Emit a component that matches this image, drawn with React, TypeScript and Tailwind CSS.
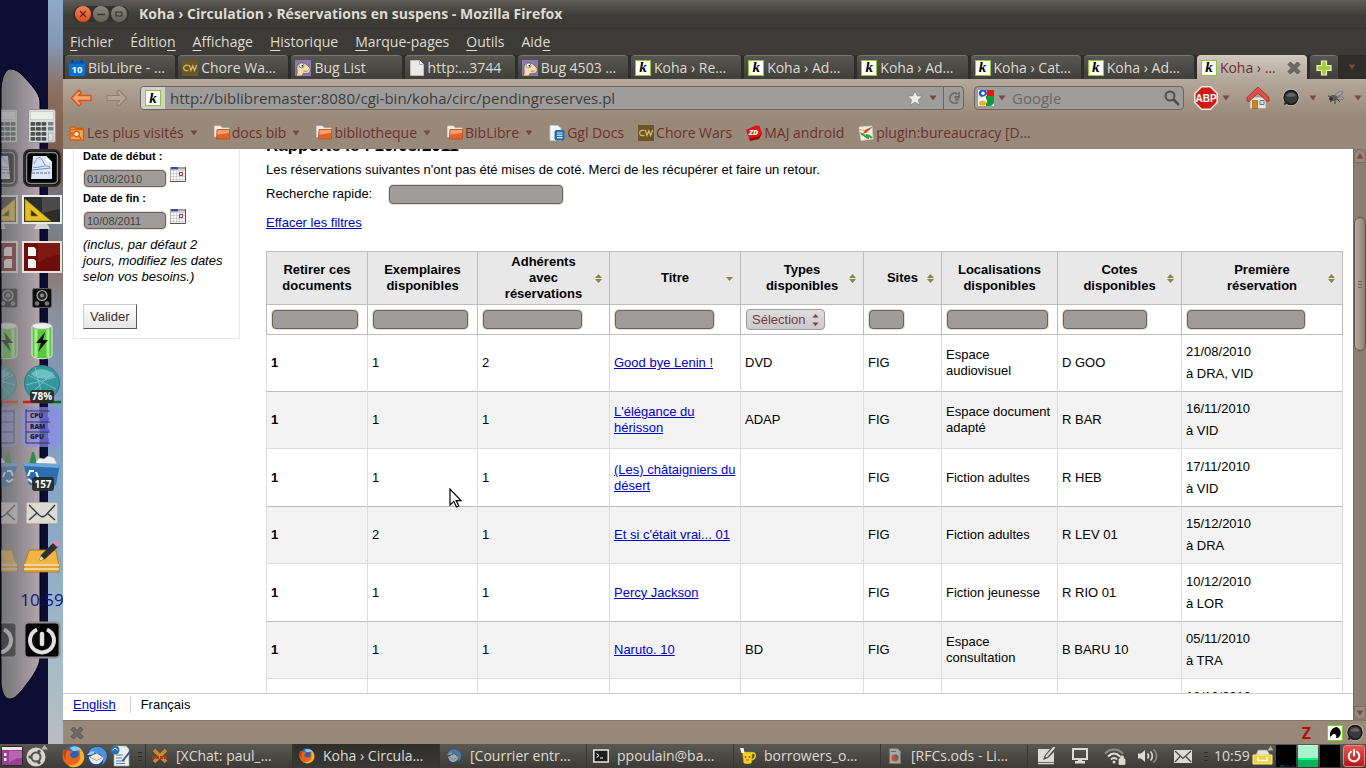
import type { ReactNode } from "react"
import clsx from "clsx"

const UI = "font-['Open_Sans','Noto_Sans',sans-serif]"
const FIELD = "rounded-[4px] border border-[#6e6259] bg-[#9f9d9b] shadow-[0_0_0_1px_#e6ded6] outline-none"

/* ---------- small icons ---------- */

function KohaIcon() {
  return (
    <span className="flex h-4 w-4 shrink-0 items-center justify-center border border-[#8fc531] bg-white font-['Liberation_Serif',serif] text-[15px] leading-none font-bold text-black italic">
      k
    </span>
  )
}

function CwIcon() {
  return (
    <svg viewBox="0 0 16 16" className="h-4 w-4 shrink-0">
      <rect width="16" height="16" fill="#6a552c" />
      <path d="M6.500 5.600C4 4.600 1.600 5.800 1.600 8s2.400 3.300 4.900 2.200M7.300 5l1.700 5.500 1.800-4.700 1.700 4.700L14.600 5" fill="none" stroke="#d3bd63" strokeWidth="1.200" />
    </svg>
  )
}

function CalTenIcon() {
  return (
    <svg viewBox="0 0 16 16" className="h-4 w-4 shrink-0">
      <rect y="1" width="16" height="15" rx="1.500" fill="#0a6fd6" />
      <rect y="1" width="16" height="3" rx="1" fill="#0a57b4" />
      <path d="M3.500 0v3M12.500 0v3" stroke="#0a3a78" strokeWidth="1.500" />
      <text x="8" y="13.300" textAnchor="middle" fontSize="9.500" fontWeight="700" fill="#fff" fontFamily="Open Sans">10</text>
    </svg>
  )
}

function BugIcon() {
  return (
    <svg viewBox="0 0 16 16" className="h-4 w-4 shrink-0">
      <rect width="16" height="16" fill="#8b78b8" />
      <path d="M1 16c2-3 1-5 1-8 0-4 3-6 6-5 3 .3 4 2.500 6 4 2 1.500 1.500 5-.5 6-2 .8-4 .2-5.500.5L7 16z" fill="#f0dcae" stroke="#5c4630" strokeWidth=".6" />
      <circle cx="6.500" cy="5.500" r="2.400" fill="#fff" stroke="#5c4630" strokeWidth=".6" />
      <circle cx="7.300" cy="5.800" r=".9" fill="#222" />
      <path d="M8.500 11c2 .8 4 .3 5-1" fill="none" stroke="#8a6a45" strokeWidth=".7" />
    </svg>
  )
}

function PageIcon() {
  return (
    <svg viewBox="0 0 16 16" className="h-4 w-4 shrink-0">
      <path d="M1.500.5h9l4 4v11h-13z" fill="#e9e9e7" stroke="#bdbdb8" />
      <path d="M10.500.5v4h4" fill="#fff" stroke="#a9a9a4" />
    </svg>
  )
}

function FolderIcon() {
  return (
    <svg viewBox="0 0 16 16" className="h-4 w-4 shrink-0">
      <path d="M.5 1h6l1.500 2h7v9H.5z" fill="#f3efec" stroke="#d8d0ca" strokeWidth=".8" />
      <path d="M3 4.500h12.500V14H2.500z" fill="#e0642b" />
      <path d="M3 4.500h12.500V8c-4 .3-8 1.500-12.800 1.500z" fill="#f3a06d" />
      <path d="M3 4.500h12.500V14H2.500z" fill="none" stroke="#c04a17" strokeWidth=".8" />
    </svg>
  )
}

function VisitedIcon() {
  return (
    <svg viewBox="0 0 16 16" className="h-4 w-4 shrink-0" fill="none" stroke="#d2600f" strokeWidth="1.400">
      <path d="M1 3.500V2h5l1 1.500h7.500V15H1z" fill="#f0a45c" />
      <path d="M1 4.500h13.500" />
      <circle cx="7.500" cy="9" r="2.800" fill="#fff0dc" />
      <path d="M9.500 11l3 3M3 7v5" />
    </svg>
  )
}

function DocsIcon() {
  return (
    <svg viewBox="0 0 16 16" className="h-4 w-4 shrink-0">
      <path d="M1 .5h8l3 3v12H1z" fill="#f4f6f8" stroke="#c4ccd4" strokeWidth=".8" />
      <rect x="5.500" y="5" width="10" height="10.500" rx="2" fill="#1f6fb2" />
      <path d="M8 8h5.500M8 10.300h5.500M8 12.600h5.500" stroke="#fff" strokeWidth="1.100" />
    </svg>
  )
}

function ZdIcon() {
  return (
    <svg viewBox="0 0 16 16" className="h-4 w-4 shrink-0">
      <path d="M0 5L10 .3 13.500 1 16 8l-3 6-9 1.700z" fill="#dd1616" />
      <path d="M4 15.700l9-1.700 3-6-3.500 3.500-9 1.700z" fill="#9c0808" />
      <text x="7.500" y="10" textAnchor="middle" fontSize="7.500" fontWeight="800" fontStyle="italic" fill="#fff" fontFamily="Open Sans">ZD</text>
    </svg>
  )
}

function WikiIcon() {
  return (
    <svg viewBox="0 0 16 16" className="h-4 w-4 shrink-0">
      <path d="M1 2l13-1 1 13-12 1.500z" fill="#f1efe6" stroke="#d9d5c6" strokeWidth=".7" />
      <path d="M15.500 1L8 8l-3 .5L7 5z" fill="#d9452a" />
      <path d="M1.500 4.500l5 1M2 7.500l3 2" stroke="#c9a46a" strokeWidth="1.200" />
      <path d="M3 9c4 0 4 4 8 4M8 10c2 0 4 1 6 3" fill="none" stroke="#2fa53c" strokeWidth="1.900" />
    </svg>
  )
}

function Caret({ className }: { className?: string }) {
  return (
    <svg viewBox="0 0 8 6" className={clsx("h-1.5 w-2 shrink-0", className)}>
      <path d="M.5.5h7L4 5.500z" fill="#7b4542" />
    </svg>
  )
}

function CrossIcon() {
  return (
    <svg viewBox="0 0 14 14" className="h-3.5 w-3.5">
      <path d="M3.500 1L7 4.500 10.500 1 13 3.500 9.500 7l3.500 3.500-2.500 2.500L7 9.500 3.500 13 1 10.500 4.500 7 1 3.500z" fill="#6c6a67" stroke="#4a4846" strokeWidth=".8" />
    </svg>
  )
}

function BubbleIcon() {
  return (
    <svg viewBox="0 0 18 18" className="h-4.5 w-4.5 shrink-0">
      <circle cx="9" cy="8.500" r="8" fill="none" stroke="#d0c8c0" />
      <circle cx="9" cy="8.500" r="7" fill="#3a3a3a" stroke="#111" strokeWidth="1.400" />
      <path d="M3 11l-1 5 6-2z" fill="#222" />
      <path d="M4 7c2-4 8-4 10 0-3 1-7 1-10 0z" fill="#666" />
    </svg>
  )
}

function FirefoxIcon({ className }: { className: string }) {
  return (
    <svg viewBox="0 0 24 24" className={clsx("shrink-0", className)}>
      <circle cx="12" cy="11" r="10.500" fill="#2b62b4" />
      <path d="M8 3c4-3 10-2 13 3-4-1-7 1-10 0z" fill="#8cc9f0" />
      <path d="M2 4c1 1 2 1.500 3.500 1.500C8 5 10 6 11 7.500c-2 .5-3.500 2-2.500 4 1.500 3 6 3 8.500 0 1-2 .5-4-1-6 6 3 7 9 3 13-4 5-12 5-16 0C0 15 0 9 2 4z" fill="#e8661b" />
      <path d="M18 3c6 4 7 12 2 17-4 4-10 4-14 1 7 1 13-2 13-9 0-4-1-6-1-9z" fill="#f7b22b" />
      <path d="M2 4c1 1 2 1.500 3.500 1.500C4 8 3 12 4.500 16 1 13 1 8 2 4z" fill="#c9400f" />
    </svg>
  )
}

function ThunderbirdIcon({ className }: { className: string }) {
  return (
    <svg viewBox="0 0 24 24" className={clsx("shrink-0", className)}>
      <circle cx="12" cy="12" r="11" fill="#1b4a8c" />
      <path d="M3 7C7 0 18 0 22 8c2 5 0 11-5 14 3-5 2-9-2-12-4-2-8-1-12-3z" fill="#4b94d8" />
      <path d="M3 13l9-4 7 5c-1 4-4 7-8 7s-7-3-8-8z" fill="#ece9e2" />
      <path d="M4 13l7.500 4L18 13.500" fill="none" stroke="#9c978c" />
      <path d="M9 7C6 6 3 8 1 11c3-.5 6 0 8-1.500z" fill="#a8cbe8" />
    </svg>
  )
}

/* ---------- desktop dock on the left ---------- */

// `labels` is false for the faded reflection, which shows the bare icon.
const dockIcons: { slot: string; draw: (labels: boolean) => ReactNode }[] = [
  {
    slot: "h-[42px]",
    draw: () => (
      <svg viewBox="0 0 28 34" className="h-[34px] w-7 shrink-0">
        <rect x=".5" y=".5" width="27" height="33" rx="2" fill="#dcdcda" stroke="#8d8d8b" />
        <rect x="2.500" y="2.500" width="23" height="8" fill="#eceee8" stroke="#c4c4c0" strokeWidth=".7" />
        {[13, 18, 23, 28].map((y) =>
          [2.5, 8, 13.5].map((x) => <rect key={`${x}-${y}`} x={x} y={y} width="4.800" height="3.800" rx=".8" fill="#4c5152" />),
        )}
        <rect x="20" y="13" width="5.500" height="3.500" fill="#76858c" />
        <rect x="20" y="18" width="5.500" height="3.500" fill="#76858c" />
        <rect x="20.500" y="24" width="4.500" height="8" fill="#d7e0e6" stroke="#8a969c" strokeWidth=".6" />
      </svg>
    ),
  },
  {
    slot: "h-[42px]",
    draw: () => (
      <svg viewBox="0 0 38 38" className="h-[38px] w-[38px] shrink-0">
        <rect x="1" y="1" width="36" height="36" rx="6" fill="#000" stroke="#2a2a2a" strokeWidth="2" />
        <rect x="3.500" y="3.500" width="31" height="31" rx="4" fill="none" stroke="#8a8a8a" strokeWidth="1.500" />
        <path d="M10 7h13l6 6v17H8z" fill="#dbe7f3" />
        <path d="M23 7v6h6" fill="#fff" />
        <path d="M11 15c5-10 6-8 11 1M9 21l19-2M10 18c6 2 10-3 17 0" fill="none" stroke="#6e93c4" />
        <path d="M9 24h18" stroke="#8a94b6" strokeWidth="1.500" strokeDasharray="3 1" />
      </svg>
    ),
  },
  {
    slot: "h-[47px]",
    draw: () => (
      <svg viewBox="0 0 40 36" className="h-9 w-10 shrink-0">
        <path d="M15 28h10l3 6H12z" fill="#d2d2cf" />
        <rect x="1" y="1" width="38" height="27" fill="#2c2c2c" stroke="#ecebe6" strokeWidth="2" />
        <path d="M20 2h18v12c-8 1-14 4-18 4z" fill="#4a4a4a" />
        <path d="M3 4l26 22H3zM9 15v6h7z" fill="#e3c11f" fillRule="evenodd" stroke="#8a7408" strokeWidth=".6" />
      </svg>
    ),
  },
  {
    slot: "h-[42px]",
    draw: () => (
      <svg viewBox="0 0 40 32" className="h-8 w-10 shrink-0">
        <rect x="1" y="1" width="38" height="30" fill="#6f0d0a" stroke="#e6e4e2" strokeWidth="2" />
        <path d="M16 2h22v12c-10 0-16 4-22 8z" fill="#7e1a13" />
        <path d="M6 6h6l2 2v7H6zM6 18h6l2 2v7H6z" fill="#f3f3f3" />
      </svg>
    ),
  },
  {
    slot: "h-10",
    draw: () => (
      <svg viewBox="0 0 20 20" className="h-5 w-5 shrink-0">
        <rect x=".5" y=".5" width="19" height="19" rx="2" fill="#0d0d0d" stroke="#5c5c5c" />
        <circle cx="10" cy="7.500" r="5" fill="#262626" stroke="#a8a8a8" strokeWidth="1.200" />
        <circle cx="10" cy="7.500" r="2" fill="#8c8c8c" />
        <circle cx="5" cy="15.500" r="2.300" fill="#777" />
        <circle cx="15" cy="15.500" r="2.300" fill="#777" />
      </svg>
    ),
  },
  {
    slot: "h-[45px]",
    draw: () => (
      <svg viewBox="0 0 22 38" className="h-[38px] w-[22px] shrink-0">
        <path d="M1 4v29c0 5 20 5 20 0V4z" fill="#58c93a" stroke="#e4ece0" />
        <path d="M5 6v29M17 6v29" stroke="#a7ee8f" strokeWidth="3" />
        <ellipse cx="11" cy="4" rx="10" ry="3.200" fill="#ecefe9" stroke="#a3aa9f" strokeWidth=".7" />
        <path d="M14 10L5 21h5l-3 9 10-12h-5z" fill="#111" />
      </svg>
    ),
  },
  {
    slot: "h-[42px]",
    draw: (labels) => (
      <svg viewBox="0 0 38 42" className="h-[42px] w-[38px] shrink-0">
        <circle cx="19" cy="20" r="17.500" fill="#36959b" stroke="#2b767c" />
        <path d="M8 11c6-7 18-6 24 2-5 4-18 4-24-2z" fill="#6cc0c2" />
        <path d="M5 12l28 14M12 4l8 32M30 9L8 31M3 22l30-8" stroke="#8bd0d0" strokeWidth=".7" fill="none" />
        <path d="M0 39h18" stroke="#ee1111" strokeWidth="2.500" />
        <path d="M18 39h20" stroke="#0d6b12" strokeWidth="2.500" />
        {labels && (
          <g>
            <rect x="7" y="27" width="24" height="13" rx="3" fill="#222826" fillOpacity=".9" />
            <text x="19" y="37.300" textAnchor="middle" fontSize="10" fontWeight="700" fill="#fff" fontFamily="Open Sans">78%</text>
          </g>
        )}
      </svg>
    ),
  },
  {
    slot: "h-11",
    draw: (labels) => (
      <svg viewBox="0 0 40 40" className="h-10 w-10 shrink-0">
        <rect width="40" height="40" rx="7" fill="#8b8ce6" fillOpacity=".7" />
        <path d="M4 2v34M4 4h24M4 15h24M4 25h24M4 36h24" stroke="#333355" fill="none" />
        {labels && (
          <g fontSize="6.500" fontWeight="800" fill="#1b1b2c" fontFamily="Open Sans">
            <text x="8" y="11">CPU</text>
            <text x="8" y="21.500">RAM</text>
            <text x="8" y="32">GPU</text>
          </g>
        )}
        <path d="M20 12h7M20 23h7M20 33h7" stroke="#6a55e0" strokeWidth="2.500" strokeDasharray="3 1" />
      </svg>
    ),
  },
  {
    slot: "h-11",
    draw: (labels) => (
      <svg viewBox="0 0 38 42" className="h-[42px] w-[38px] shrink-0">
        <path d="M6 14L9 2h2l3 12z" fill="#2f8c46" />
        <path d="M13 12l3-4 5 1 4-3 6 2 3 6-19 3z" fill="#eef0f2" stroke="#b7bcc2" strokeWidth=".6" />
        <path d="M0 13l37 1-4 21c-8 4-18 4-27-1z" fill="#2d6fae" />
        <path d="M0 13l37 1-1 4-35-2z" fill="#69a7dc" />
        <path d="M5 26l2-5h4M5 29l4 3 3-2M13 22l2 5" fill="none" stroke="#fff" strokeWidth="2" />
        {labels && (
          <g>
            <rect x="9" y="27" width="22" height="14" rx="3" fill="#222826" fillOpacity=".9" />
            <text x="20" y="37.800" textAnchor="middle" fontSize="10" fontWeight="700" fill="#fff" fontFamily="Open Sans">157</text>
          </g>
        )}
      </svg>
    ),
  },
  {
    slot: "h-10",
    draw: () => (
      <svg viewBox="0 0 32 22" className="h-[22px] w-8 shrink-0">
        <rect x=".5" y=".5" width="31" height="21" rx="1.500" fill="#dddad2" stroke="#b5b2aa" />
        <path d="M3 3l10 10 3 2 3-1L29 3M3 18l8-7M29 18l-8-7" fill="none" stroke="#2e3742" strokeWidth="1.400" />
      </svg>
    ),
  },
  {
    slot: "h-12",
    draw: () => (
      <svg viewBox="0 0 38 36" className="h-9 w-[38px] shrink-0">
        <path d="M6 11h27l3 15v7H1v-7z" fill="#e0a63a" stroke="#b07918" strokeWidth=".8" />
        <path d="M1 26h35M1 30h35" stroke="#f6e5b4" strokeWidth="1.500" />
        <path d="M7 12h25l3 13H3z" fill="#efb549" />
        <path d="M16 22l2-6L30 4l5 4-13 12z" fill="#2f2f2f" />
        <path d="M30 4l2-2c2-1 5 1 4 4l-2 2z" fill="#e58aa8" />
        <path d="M16 22l2-5 3 3z" fill="#f1dcb8" />
      </svg>
    ),
  },
  {
    slot: "h-9",
    draw: (labels) =>
      labels && (
        <svg viewBox="0 0 42 36" className="h-9 w-[42px] shrink-0">
          <text x="21" y="25" textAnchor="middle" fontSize="17" fill="#111488" fontFamily="Open Sans">10:59</text>
        </svg>
      ),
  },
  {
    slot: "h-[46px]",
    draw: () => (
      <svg viewBox="0 0 38 38" className="h-[38px] w-[38px] shrink-0">
        <rect x="1.500" y="1.500" width="35" height="35" rx="4" fill="#020202" stroke="#8e8e8e" strokeWidth="2" />
        <path d="M14 8.500a12 12 0 1 0 10 0" fill="none" stroke="#e0e0e0" strokeWidth="4" />
        <path d="M19 13v10" stroke="#e0e0e0" strokeWidth="4.500" strokeLinecap="round" />
      </svg>
    ),
  },
]

function Dock() {
  return (
    <aside className="relative flex w-[63px] shrink-0 overflow-hidden bg-[linear-gradient(to_bottom,#8ea9c6_0,#8298b4_6%,#8d6f60_12%,#7a5a49_22%,#71879f_29%,#8b7468_35%,#89909c_42%,#7f9dc6_55%,#8eacc4_75%,#a3bccb_88%,#b9bcc0_100%)]">
      <div className="w-12 bg-[#0b0d33]" />
      <svg viewBox="0 0 63 744" className="absolute top-0 left-0 h-[744px] w-[63px]">
        <defs>
          <linearGradient id="dock">
            <stop offset="0" stopColor="#747474" />
            <stop offset=".5" stopColor="#908b90" />
            <stop offset="1" stopColor="#b6a5ae" />
          </linearGradient>
        </defs>
        <path d="M1 88C2 76 6 69 10 69c6 0 11 4 16 10 9 10 14 16 14 24v554c0 8-6 18-14 28-6 8-11 14-16 14-5 0-8-5-9-16z" fill="url(#dock)" stroke="#000" />
      </svg>
      <div className="absolute inset-0 flex flex-col pt-[105px]">
        {dockIcons.map(({ slot, draw }, i) => (
          <div key={i} className={clsx("flex items-center", slot)}>
            <div className="ml-px flex w-[17px] shrink-0 justify-end overflow-hidden opacity-40 [&>svg]:-scale-x-100" aria-hidden="true">
              {draw(false)}
            </div>
            <div className="flex min-w-0 flex-1 justify-center pl-0.5">{draw(true)}</div>
          </div>
        ))}
      </div>
    </aside>
  )
}

/* ---------- browser chrome ---------- */

const menus = [
  ["", "F", "ichier"],
  ["Éditio", "n", ""],
  ["", "A", "ffichage"],
  ["", "H", "istorique"],
  ["", "M", "arque-pages"],
  ["", "O", "utils"],
  ["Aid", "e", ""],
]

const tabs: { label: string; icon: ReactNode; active?: boolean }[] = [
  { label: "BibLibre - …", icon: <CalTenIcon /> },
  { label: "Chore Wa…", icon: <CwIcon /> },
  { label: "Bug List", icon: <BugIcon /> },
  { label: "http:…3744", icon: <PageIcon /> },
  { label: "Bug 4503 …", icon: <BugIcon /> },
  { label: "Koha › Re…", icon: <KohaIcon /> },
  { label: "Koha › Ad…", icon: <KohaIcon /> },
  { label: "Koha › Ad…", icon: <KohaIcon /> },
  { label: "Koha › Cat…", icon: <KohaIcon /> },
  { label: "Koha › Ad…", icon: <KohaIcon /> },
  { label: "Koha › …", icon: <KohaIcon />, active: true },
]

const bookmarks: { label: string; icon: ReactNode; menu?: boolean }[] = [
  { label: "Les plus visités", icon: <VisitedIcon />, menu: true },
  { label: "docs bib", icon: <FolderIcon />, menu: true },
  { label: "bibliotheque", icon: <FolderIcon />, menu: true },
  { label: "BibLibre", icon: <FolderIcon />, menu: true },
  { label: "Ggl Docs", icon: <DocsIcon /> },
  { label: "Chore Wars", icon: <CwIcon /> },
  { label: "MAJ android", icon: <ZdIcon /> },
  { label: "plugin:bureaucracy [D…", icon: <WikiIcon /> },
]

function TitleBar() {
  return (
    <header className={clsx(UI, "bg-[#3c3b37] text-[#dfdbd2]")}>
      <div className="flex h-[29px] items-center border-b border-[#383733] bg-linear-to-b from-[#5d5b55] to-[#3c3b37] to-60% pl-2.5">
        <div className="flex items-center gap-0.5 rounded-full bg-[#33322e] px-0.5">
          <button aria-label="Fermer" className="flex h-4 w-4 items-center justify-center rounded-full bg-linear-to-b from-[#f58256] to-[#dd4b15]">
            <svg viewBox="0 0 8 8" className="h-2 w-2"><path d="M1 1l6 6M7 1L1 7" stroke="#5a2412" strokeWidth="1.300" /></svg>
          </button>
          <button aria-label="Réduire" className="flex h-4 w-4 items-center justify-center rounded-full bg-linear-to-b from-[#8a877d] to-[#65625a]">
            <svg viewBox="0 0 8 8" className="h-2 w-2"><path d="M0 4.500h8" stroke="#35342f" strokeWidth="1.300" /></svg>
          </button>
          <button aria-label="Agrandir" className="flex h-4 w-4 items-center justify-center rounded-full bg-linear-to-b from-[#8a877d] to-[#65625a]">
            <svg viewBox="0 0 8 8" className="h-2 w-2"><path d="M1 2h6v4H1z" fill="none" stroke="#35342f" strokeWidth="1.200" /></svg>
          </button>
        </div>
        <h1 className="ml-2.5 text-sm font-bold whitespace-nowrap">Koha › Circulation › Réservations en suspens - Mozilla Firefox</h1>
      </div>
      <nav className="flex h-[26px] items-center gap-[17px] px-[7px] text-sm">
        {menus.map(([before, key, after]) => (
          <button key={before + key + after}>
            {before}
            <span className="underline underline-offset-3">{key}</span>
            {after}
          </button>
        ))}
      </nav>
    </header>
  )
}

function TabBar() {
  return (
    <div className={clsx(UI, "flex h-6 items-end gap-[3px] bg-[#2e2d2a] pl-0.5 text-sm")}>
      {tabs.map(({ label, icon, active }, i) => (
        <div
          key={i}
          className={clsx(
            "flex h-6 min-w-0 flex-1 items-center rounded-t-[4px] border-t px-1",
            active ? "border-[#d8cec4] bg-linear-to-b from-[#cfc6bd] to-[#b5a99d] text-[#6e2f2f]" : "border-[#77756f] bg-linear-to-b from-[#575650] to-[#403f3b] text-[#dfdbd2]",
          )}
        >
          <button className="flex min-w-0 flex-1 items-center gap-[3px] whitespace-nowrap">
            {icon}
            <span>{label}</span>
          </button>
          {active && (
            <button aria-label="Fermer l'onglet" className="mr-0.5">
              <CrossIcon />
            </button>
          )}
        </div>
      ))}
      <button aria-label="Nouvel onglet" className="flex h-6 w-7 items-center justify-center rounded-t-[4px] border-t border-[#77756f] bg-linear-to-b from-[#575650] to-[#403f3b]">
        <svg viewBox="0 0 16 16" className="h-4 w-4"><path d="M5.500 1h5v4.500H15v5h-4.500V15h-5v-4.500H1v-5h4.500z" fill="#a4cf3e" stroke="#e8f4c8" strokeWidth="1.200" /></svg>
      </button>
      <button aria-label="Liste des onglets" className="flex h-6 w-[25px] items-center justify-center pr-1">
        <Caret />
      </button>
    </div>
  )
}

function NavBar() {
  return (
    <div className="flex h-[38px] items-center bg-linear-to-b from-[#b5a99d] to-[#998979] pr-1 pl-[7px]">
      <button aria-label="Précédent">
        <svg viewBox="0 0 22 18" className="h-[18px] w-[22px]"><path d="M9 1L1.500 9 9 17l2.500-2.500L8.500 11.500H21v-5H8.500l3-3z" fill="#f5a46f" stroke="#d4561c" strokeWidth="1.500" strokeLinejoin="round" /></svg>
      </button>
      <button aria-label="Suivant" className="ml-3.5">
        <svg viewBox="0 0 22 18" className="h-[18px] w-[22px]"><path d="M13 1l7.500 8L13 17l-2.500-2.500 3-3H1v-5h12.500l-3-3z" fill="#b3a699" stroke="#8e8173" strokeWidth="1.100" strokeLinejoin="round" /></svg>
      </button>
      <form className="ml-3 flex h-6 min-w-0 flex-1 items-center overflow-hidden rounded-[4px] border border-[#6e6259] bg-[#9f9d9b]">
        <span className="flex h-full w-6 shrink-0 items-center justify-center bg-[#d2d0ce]">
          <KohaIcon />
        </span>
        <input aria-label="Adresse" defaultValue="http://biblibremaster:8080/cgi-bin/koha/circ/pendingreserves.pl" className={clsx(UI, "min-w-0 flex-1 bg-transparent pl-[5px] text-[15px] text-[#3c3c3c] outline-none")} />
        <svg viewBox="0 0 16 16" className="h-4 w-4"><path d="M8 1l2.100 4.800 5.200.5-3.900 3.500 1.100 5.200L8 12.300 3.500 15l1.100-5.200L.7 6.300l5.200-.5z" fill="#ececec" stroke="#777" strokeWidth=".6" /></svg>
        <Caret className="mx-1.5" />
        <button type="button" aria-label="Actualiser" className="flex h-full w-5 items-center justify-center border-l border-[#6e6259]">
          <svg viewBox="0 0 14 14" className="h-3.5 w-3.5"><path d="M10.500 3A5 5 0 1 0 11 11M12 1v5H7.500M8 8.500h4" fill="none" stroke="#6d6a67" strokeWidth="1.800" /></svg>
        </button>
      </form>
      <form className="ml-2.5 flex h-6 w-[210px] shrink-0 items-center rounded-[4px] border border-[#6e6259] bg-[#9f9d9b] px-[3px]">
        <svg viewBox="0 0 16 16" className="h-4 w-4 shrink-0">
          <rect width="16" height="16" fill="#e8e8e8" />
          <path d="M9 0h7v6H9z" fill="#e8170b" />
          <path d="M8 6h8v7l-3 3H8z" fill="#119a3c" />
          <path d="M3 0h6l-1 1c2 2 1 5-2 5L4 7C0 6 0 1 3 0z" fill="#2456c4" />
          <path d="M4 7c4 1 5 2 5 5s-7 3-9 1 1-4 5-4z" fill="#fff" />
          <ellipse cx="4.500" cy="13" rx="3.600" ry="2.500" fill="#f3b30f" />
          <circle cx="5" cy="3.300" r="1.700" fill="#fff" />
        </svg>
        <Caret className="ml-1" />
        <input aria-label="Google" placeholder="Google" className={clsx(UI, "ml-1.5 min-w-0 flex-1 bg-transparent text-[15px] outline-none placeholder:text-[#6b6661]")} />
        <button type="button" aria-label="Rechercher">
          <svg viewBox="0 0 16 16" className="h-4 w-4"><circle cx="6" cy="6" r="4.500" fill="none" stroke="#4f4c49" strokeWidth="2" /><path d="M9.500 9.500l5.500 5.500" stroke="#4f4c49" strokeWidth="2.500" /></svg>
        </button>
      </form>
      <button aria-label="Adblock Plus" className="ml-2.5 flex items-center gap-1">
        <svg viewBox="0 0 24 24" className="h-6 w-6">
          <path d="M7.500.8h9l6.700 6.700v9l-6.700 6.700h-9L.8 16.500v-9z" fill="#cf1a14" stroke="#f1e6e2" strokeWidth="1.600" />
          <text x="12" y="15.600" textAnchor="middle" fontSize="10" fontWeight="800" fill="#fff" fontFamily="Liberation Sans">ABP</text>
        </svg>
        <Caret />
      </button>
      <button aria-label="Accueil" className="ml-4">
        <svg viewBox="0 0 24 24" className="h-6 w-6">
          <path d="M4 11h16v11.500H4z" fill="#ece6e1" stroke="#a89d94" strokeWidth=".8" />
          <path d="M12 1L1 11.500V15l2 .5L12 7l9 8.500 2-.5v-3.500z" fill="#dd4f4c" stroke="#a02320" strokeWidth=".8" />
          <path d="M6.500 14.500h5v8h-5z" fill="#d0851f" stroke="#8f5a10" strokeWidth=".7" />
          <path d="M14 14.500h4v4h-4z" fill="#cfe0ea" stroke="#67757e" />
        </svg>
      </button>
      <button aria-label="Messages" className="ml-3 flex items-center gap-[9px]">
        <BubbleIcon />
        <Caret />
      </button>
      <button aria-label="Firebug" className="ml-2.5 flex items-center gap-[9px]">
        <svg viewBox="0 0 18 16" className="h-4 w-[18px]">
          <path d="M1 6l5 1M3 12l4-3M8 14v-4M13 12l-3-3" stroke="#3d3a38" />
          <ellipse cx="6.500" cy="8" rx="4" ry="3" fill="#5e5b59" />
          <circle cx="4" cy="9" r="1.800" fill="#2a2727" />
          <path d="M8 6c1-4 5-5 8-4-1 3-4 5-8 4zM10 8c3-2 6-1 7 1-3 1-5 1-7-1z" fill="#a5a3a3" stroke="#5c5957" strokeWidth=".6" />
        </svg>
        <Caret />
      </button>
    </div>
  )
}

function BookmarksBar() {
  return (
    <nav className={clsx(UI, "flex h-8 items-center gap-3.5 border-b border-[#8c8781] bg-[#998979] px-1.5 text-sm text-[#6e2f2f]")}>
      {bookmarks.map(({ label, icon, menu }) => (
        <a key={label} href="#" className="flex items-center gap-0.5 whitespace-nowrap">
          {icon}
          {label}
          {menu && <Caret className="mr-0.5 ml-1" />}
        </a>
      ))}
    </nav>
  )
}

/* ---------- page content ---------- */

function CalendarIcon() {
  return (
    <svg viewBox="0 0 16 15" className="h-[15px] w-4">
      <path d="M0 0h16v15H0z" fill="#fff" />
      <path d="M1 3.500h14M1 6.500h14M1 9.500h14M1 12.500h14M3.500 3v11M6.500 3v11M9.500 3v11M12.500 3v11" stroke="#c9c9c9" strokeWidth=".8" />
      <path d="M1 0h7v2.500H1z" fill="#3d4a9c" />
      <path d="M8 0h8v2.500H8z" fill="#a6a6a6" />
      <path d="M9.500 5.500h3v3h-3z" fill="#fff" stroke="#a32c34" />
      <path d="M.5 0v14" stroke="#aaa" />
      <path d="M15.500 0v14.500H0" fill="none" stroke="#555" />
    </svg>
  )
}

function DateField({ id, label, value }: { id: string; label: string; value: string }) {
  return (
    <div className="pb-1 text-[11px]">
      <label htmlFor={id} className="block leading-[14px] font-bold">
        {label}
      </label>
      <div className="mt-[7px] flex h-[17px] items-center gap-1 pl-px">
        <input id={id} defaultValue={value} className={clsx(FIELD, "h-[17px] w-[82px] px-0.5 text-[#444]")} />
        <button aria-label="Calendrier" className="-mt-2">
          <CalendarIcon />
        </button>
      </div>
    </div>
  )
}

function SortIcon({ desc }: { desc?: boolean }) {
  return (
    <svg viewBox="0 0 7 9" className="h-[9px] w-[7px] justify-self-center">
      {!desc && <path d="M3.500 0L7 4H0z" fill="#85854c" />}
      {desc ? <path d="M0 3h7L3.500 7z" fill="#85854c" /> : <path d="M0 5h7L3.500 9z" fill="#85854c" />}
    </svg>
  )
}

const columns = [
  { title: "Retirer ces documents", col: "w-[101px]", field: "w-[86px]" },
  { title: "Exemplaires disponibles", col: "w-[110px]", field: "w-[95px]" },
  { title: "Adhérents avec réservations", col: "w-[132px]", field: "w-[99px]", sort: "both" },
  { title: "Titre", col: "w-[131px]", field: "w-[99px]", sort: "desc" },
  { title: "Types disponibles", col: "w-[123px]", field: "", sort: "both" },
  { title: "Sites", col: "w-[78px]", field: "w-[35px]", sort: "both" },
  { title: "Localisations disponibles", col: "w-[116px]", field: "w-[101px]" },
  { title: "Cotes disponibles", col: "w-[124px]", field: "w-[84px]", sort: "both" },
  { title: "Première réservation", col: "w-[161px]", field: "w-[118px]", sort: "both" },
]

const rows = [
  { pull: "1", items: "1", patrons: "2", title: "Good bye Lenin !", type: "DVD", site: "FIG", loc: "Espace audiovisuel", call: "D GOO", date: "21/08/2010", at: "à DRA, VID" },
  { pull: "1", items: "1", patrons: "1", title: "L'élégance du hérisson", type: "ADAP", site: "FIG", loc: "Espace document adapté", call: "R BAR", date: "16/11/2010", at: "à VID" },
  { pull: "1", items: "1", patrons: "1", title: "(Les) châtaigniers du désert", type: "", site: "FIG", loc: "Fiction adultes", call: "R HEB", date: "17/11/2010", at: "à VID" },
  { pull: "1", items: "2", patrons: "1", title: "Et si c'était vrai... 01", type: "", site: "FIG", loc: "Fiction adultes", call: "R LEV 01", date: "15/12/2010", at: "à DRA" },
  { pull: "1", items: "1", patrons: "1", title: "Percy Jackson", type: "", site: "FIG", loc: "Fiction jeunesse", call: "R RIO 01", date: "10/12/2010", at: "à LOR" },
  { pull: "1", items: "1", patrons: "1", title: "Naruto. 10", type: "BD", site: "FIG", loc: "Espace consultation", call: "B BARU 10", date: "05/11/2010", at: "à TRA" },
  { pull: "", items: "", patrons: "", title: "", type: "", site: "", loc: "", call: "", date: "18/10/2010", at: "" },
]

function HoldsTable() {
  return (
    <table className="mt-5 w-full table-fixed border-collapse border border-[#bcbcbc]">
      <colgroup>
        {columns.map((c) => (
          <col key={c.title} className={c.col} />
        ))}
      </colgroup>
      <thead>
        <tr className="h-[53px] bg-[#e8e8e8]">
          {columns.map((c) => (
            <th key={c.title} className="border border-[#bcbcbc] px-1 py-0 leading-4 font-bold">
              {c.sort ? (
                <div className="grid grid-cols-[14px_1fr_14px] items-center">
                  <span />
                  <span>{c.title}</span>
                  <SortIcon desc={c.sort === "desc"} />
                </div>
              ) : (
                c.title
              )}
            </th>
          ))}
        </tr>
        <tr className="h-[30px]">
          {columns.map((c) => (
            <td key={c.title} className="border border-[#bcbcbc] p-0 pl-[5px]">
              {c.field ? (
                <input aria-label={c.title} className={clsx(FIELD, "block h-[19px]", c.field)} />
              ) : (
                <div className="relative w-[79px]">
                  <select aria-label={c.title} className="block h-[21px] w-full appearance-none rounded-[4px] border border-[#9b9b9b] bg-linear-to-b from-[#dedede] to-[#c9c9c9] pl-[5px] text-[13px] text-[#7a3b3b]">
                    <option>Sélection</option>
                  </select>
                  <svg viewBox="0 0 7 13" className="pointer-events-none absolute top-1 right-1.5 h-[13px] w-[7px]"><path d="M3.500 1L6.500 4.500h-6zM.5 9.500h6l-3 3.500z" fill="#7a3b3b" /></svg>
                </div>
              )}
            </td>
          ))}
        </tr>
      </thead>
      <tbody>
        {rows.map((r, i) => (
          <tr
            key={i}
            className={clsx(
              "*:border-x *:border-[#dcdcdc] *:py-0 *:pr-0 *:pl-1",
              i % 2 ? "h-[57px] border-b border-b-[#dcdcdc] bg-[#f3f3f3]" : "h-[58px] border-b border-b-[#bcbcbc] first:h-[57px]",
            )}
          >
            <td className="font-bold">{r.pull}</td>
            <td>{r.items}</td>
            <td>{r.patrons}</td>
            <td>
              {r.title && (
                <a href="#" className="text-[#0000cc] underline">
                  {r.title}
                </a>
              )}
            </td>
            <td>{r.type}</td>
            <td>{r.site}</td>
            <td>{r.loc}</td>
            <td>{r.call}</td>
            <td className="leading-[22px]">
              <div>{r.date}</div>
              <div className="h-[22px]">{r.at}</div>
            </td>
          </tr>
        ))}
      </tbody>
    </table>
  )
}

function Page() {
  return (
    <div className="relative flex min-h-0 flex-1 bg-white font-['Liberation_Sans',Arial,sans-serif] text-[13px] leading-4 text-black">
      <div className="flex min-w-0 flex-1 flex-col">
        <div className="flex min-h-0 flex-1 items-start overflow-hidden pr-[11px] pl-2.5">
          <aside className="w-[167px] shrink-0 border border-t-0 border-[#e8e8e8] px-[9px] pb-[9px]">
            <DateField id="start" label="Date de début :" value="01/08/2010" />
            <DateField id="end" label="Date de fin :" value="10/08/2011" />
            <p className="mt-1 italic">(inclus, par défaut 2 jours, modifiez les dates selon vos besoins.)</p>
            <button className="mt-[19px] block h-[25px] border border-t-[#ccc] border-r-[#555] border-b-[#555] border-l-[#ccc] bg-linear-to-b from-white to-[#e6e6e6] px-1.5 text-[#333]">Valider</button>
          </aside>
          <main className="ml-[26px] min-w-0 flex-1">
            <h2 className="-mt-[13px] text-[17px] leading-5 font-bold">Rapporté le : 10/08/2011</h2>
            <p className="mt-1.5">Les réservations suivantes n'ont pas été mises de coté. Merci de les récupérer et faire un retour.</p>
            <div className="mt-1.5 flex h-5 items-center">
              <label htmlFor="quick" className="w-[123px]">
                Recherche rapide:
              </label>
              <input id="quick" className={clsx(FIELD, "h-[19px] w-[174px]")} />
            </div>
            <a href="#" className="mt-[11px] inline-block text-[#0000cc] underline">
              Effacer les filtres
            </a>
            <HoldsTable />
          </main>
        </div>
        <div className="flex h-[27px] shrink-0 items-start border-t border-[#ccc] bg-white px-2.5 pt-[3px]">
          <a href="#" className="text-[#0000cc] underline">
            English
          </a>
          <span className="ml-3.5 border-l border-[#ccc] pl-2.5">Français</span>
        </div>
      </div>
      <div className="flex w-[13px] shrink-0 flex-col border-l border-[#7b6d60] bg-[#8c7d6f]" aria-hidden="true">
        <div className="flex h-[14px] items-center justify-center rounded-t-full border border-[#7b6d60] bg-[#998979]">
          <Caret className="h-1 w-1.5 rotate-180" />
        </div>
        <div className="mt-[54px] flex h-[134px] flex-col items-center justify-center gap-0.5 rounded-full border border-[#5f5349] bg-linear-to-r from-[#b8aca1] to-[#8f7f70]">
          <span className="h-px w-1 bg-[#6e6259]" />
          <span className="h-px w-1 bg-[#6e6259]" />
          <span className="h-px w-1 bg-[#6e6259]" />
        </div>
        <div className="mt-auto flex h-[14px] items-center justify-center rounded-b-full border border-[#7b6d60] bg-[#998979]">
          <Caret className="h-1 w-1.5" />
        </div>
      </div>
      {/* mouse pointer */}
      <svg viewBox="0 0 13 20" className="pointer-events-none absolute top-[339px] left-[386px] h-5 w-[13px]">
        <path d="M1 1v16l3.800-3.600L7.500 19l2.300-1-2.600-5.400H12z" fill="#fff" stroke="#000" strokeWidth="1.200" />
      </svg>
    </div>
  )
}

function StatusBar() {
  return (
    <footer className="flex h-6 shrink-0 items-center border-t border-[#82756a] bg-[#998979] pr-0.5 pl-[7px]">
      <button aria-label="Fermer la barre">
        <CrossIcon />
      </button>
      <span className={clsx(UI, "mr-4 ml-auto text-base leading-none font-bold text-[#b00d0d]")}>Z</span>
      <svg viewBox="0 0 16 16" className="mr-[3px] h-4 w-4">
        <rect x=".5" y=".5" width="15" height="15" fill="#fff" stroke="#72d416" />
        <path d="M3 12C2 6 6 2 10 2c4 2 5 7 2 10-1 1-2 1-3 1 1-2 0-4-2-4-2 0-2 2-4 3z" fill="#000" />
      </svg>
      <BubbleIcon />
    </footer>
  )
}

/* ---------- bottom panel ---------- */

const tasks: { label: string; icon: ReactNode; active?: boolean }[] = [
  {
    label: "[XChat: paul_…",
    icon: (
      <svg viewBox="0 0 16 16" className="h-4 w-4 shrink-0">
        <path d="M2 2l12 12M14 2L2 14" stroke="#d08a22" strokeWidth="3.500" />
        <path d="M0 9.500h16" stroke="#a23b2a" strokeWidth="3" strokeDasharray="3 1" />
      </svg>
    ),
  },
  { label: "Koha › Circula…", icon: <FirefoxIcon className="h-4 w-4" />, active: true },
  { label: "[Courrier entr…", icon: <ThunderbirdIcon className="h-4 w-4 opacity-60" /> },
  {
    label: "ppoulain@ba…",
    icon: (
      <svg viewBox="0 0 16 16" className="h-4 w-4 shrink-0">
        <rect x=".8" y="2" width="14.400" height="12" fill="#1d1d1d" stroke="#e8e6e2" strokeWidth="1.500" />
        <path d="M3.500 5.500L6 7.500l-2.500 2M7 10h3" fill="none" stroke="#fff" />
      </svg>
    ),
  },
  {
    label: "borrowers_o…",
    icon: (
      <svg viewBox="0 0 16 16" className="h-4 w-4 shrink-0">
        <path d="M2.500 4h10l-1 10.500c-1 2-7 2-8 0z" fill="#f2d21f" stroke="#b08c08" strokeWidth=".6" />
        <path d="M12 5c4.500-1 4.500 6-1 7" fill="none" stroke="#e6c61c" strokeWidth="1.600" />
        <path d="M0 0h3.500l1 5h-3z" fill="#fff" />
        <circle cx="5.500" cy="9" r="1" fill="#d43b1b" />
        <circle cx="9.500" cy="9" r="1" fill="#d43b1b" />
        <path d="M6 12h3" stroke="#8a6a05" />
      </svg>
    ),
  },
  {
    label: "[RFCs.ods - Li…",
    icon: (
      <svg viewBox="0 0 16 16" className="h-4 w-4 shrink-0">
        <path d="M2.500.5h8l3 3v12h-11z" fill="#a9a7a2" stroke="#777" />
        <circle cx="8" cy="10" r="3.500" fill="#b8543c" />
        <path d="M8 10V6.500A3.500 3.500 0 0 1 11.500 10z" fill="#3d6c8c" />
        <path d="M4 3.500h5" stroke="#666" />
      </svg>
    ),
  },
]

function Grip() {
  return (
    <span className="flex flex-col gap-[3px]">
      <span className="h-px w-1 bg-[#2b2a27]" />
      <span className="h-px w-1 bg-[#2b2a27]" />
      <span className="h-px w-1 bg-[#2b2a27]" />
    </span>
  )
}

function Panel() {
  return (
    <div className={clsx(UI, "flex h-6 shrink-0 items-center bg-linear-to-b from-[#5a5852] to-[#3c3b37] text-sm text-[#dfdbd2]")}>
      <div className="flex w-[145px] shrink-0 items-center">
        <svg viewBox="0 0 22 20" className="ml-px h-5 w-[22px]">
          <rect x=".5" y=".5" width="21" height="19" rx="1" fill="#9a3f97" stroke="#2b2a27" />
          <path d="M1 1h20v3H1z" fill="#eee9df" />
          <path d="M3 7h2.500v3H3zM3 12h2.500v3H3z" fill="#f4e3f2" />
          <path d="M8 5h13v7c-6 0-9 2-13 5z" fill="#b566b0" />
        </svg>
        <svg viewBox="0 0 22 22" className="ml-[3px] h-[22px] w-[22px]">
          <circle cx="10" cy="12" r="9.500" fill="#d9d5cc" />
          <circle cx="10" cy="12" r="4.500" fill="none" stroke="#55534d" strokeWidth="2" />
          <circle cx="4" cy="12" r="1.700" fill="#55534d" />
          <circle cx="13" cy="6.500" r="1.700" fill="#55534d" />
          <circle cx="13" cy="17.500" r="1.700" fill="#55534d" />
          <path d="M18.500 0l3.500 4.500h-7z" fill="#b9b5ab" />
        </svg>
        <FirefoxIcon className="ml-3.5 h-[23px] w-[23px]" />
        <ThunderbirdIcon className="ml-px h-[22px] w-[22px]" />
        <svg viewBox="0 0 22 22" className="ml-0.5 h-[22px] w-[22px]">
          <path d="M4 1h12l3 3v17H4z" fill="#eceeef" stroke="#9aa" strokeWidth=".7" />
          <path d="M6 10h7M6 13h6M6 16h9M6 18.500h9" stroke="#5a7fa8" />
          <circle cx="5" cy="5" r="4.500" fill="#2d6fae" />
          <path d="M2.500 5L5 3l2.500 2" stroke="#fff" fill="none" />
          <path d="M20.500 6l-8 10" stroke="#32548a" strokeWidth="2" />
        </svg>
        <span className="ml-1.5">
          <Grip />
        </span>
      </div>
      {tasks.map(({ label, icon, active }) => (
        <button
          key={label}
          className={clsx(
            "flex h-6 min-w-0 flex-1 items-center gap-2 border-l border-[#36352f] pl-1.5 whitespace-nowrap",
            active && "bg-linear-to-b from-[#2f2e2b] to-[#3a3935]",
          )}
        >
          {icon}
          {label}
        </button>
      ))}
      <div className="flex w-[339px] shrink-0 items-center border-l border-[#36352f] pl-2.5">
        <svg viewBox="0 0 18 18" className="h-[18px] w-[18px]">
          <path d="M0 2h12L7 8l-2 5 5-2 6-6v10H0z" fill="#dfdbd2" />
          <path d="M16.500 0L8 10" stroke="#dfdbd2" strokeWidth="2" />
          <path d="M0 16.500h16" stroke="#dfdbd2" strokeWidth="1.500" />
        </svg>
        <svg viewBox="0 0 16 16" className="ml-4 h-4 w-4">
          <path d="M1 1h14v10H1z" fill="none" stroke="#dfdbd2" strokeWidth="2" />
          <path d="M6 11h4v2h3v2.500H3V13h3z" fill="#dfdbd2" />
        </svg>
        <svg viewBox="0 0 22 18" className="ml-4 h-[18px] w-[22px]">
          <path d="M1 6.500C6 1 14 1 19 6.500" fill="none" stroke="#8f8c85" strokeWidth="2" />
          <path d="M4 9.500c4-4 8-4 12 0M7 12.500c2-2 4-2 6 0" fill="none" stroke="#dfdbd2" strokeWidth="2" />
          <circle cx="10" cy="15" r="1.500" fill="#dfdbd2" />
          <path d="M15 12h6v5.500h-6zM16.300 12v-1.500a1.700 1.700 0 0 1 3.400 0V12" fill="#dfdbd2" stroke="#dfdbd2" strokeWidth=".8" />
        </svg>
        <svg viewBox="0 0 20 16" className="ml-3 h-4 w-5">
          <path d="M0 5.500h3L7 2v12l-4-3.500H0z" fill="#dfdbd2" />
          <path d="M9.500 5.500c1.300 1.500 1.300 3.500 0 5M12.500 3.500c2.500 2.500 2.500 6.500 0 9" fill="none" stroke="#dfdbd2" strokeWidth="1.600" />
          <path d="M15.500 1.500c4 3.500 4 9.500 0 13" fill="none" stroke="#8f8c85" strokeWidth="1.600" />
        </svg>
        <svg viewBox="0 0 18 13" className="ml-4 h-[13px] w-[18px]">
          <path d="M0 0h18v13H0z" fill="#dfdbd2" />
          <path d="M1 1l8 7.500L17 1M1 12l5.500-6M17 12l-5.500-6" fill="none" stroke="#46453f" strokeWidth="1.200" />
        </svg>
        <span className="ml-3">
          <Grip />
        </span>
        <time className="ml-1.5 w-[38px]">10:59</time>
        <svg viewBox="0 0 22 20" className="h-5 w-[22px]">
          <path d="M4 9l2-5h9l3 5z" fill="#e8e5dc" stroke="#98958d" strokeWidth=".8" />
          <path d="M1 9h19v9H1z" fill="#efd23c" stroke="#f9eea0" />
          <path d="M6 11v3.500h9V11" fill="none" stroke="#fff" strokeWidth="1.600" />
          <path d="M18.500 0l3 4.500h-6z" fill="#b9b5ab" />
        </svg>
        <div className="ml-0.5 flex gap-0.5">
          <svg viewBox="0 0 20 22" className="h-[22px] w-5 bg-black"><path d="M4 21h5M12 20.500v1.500M16 21h2" stroke="#0d5f9c" /></svg>
          <div className="h-[22px] w-5 border-t border-[#c9f7dd] bg-[linear-gradient(to_bottom,#a9f3cd_55%,#0bf37c_55%,#0bf37c_66%,#00b45c_66%)]" />
          <div className="h-[22px] w-5 bg-black" />
        </div>
        <button aria-label="Éteindre" className="ml-[3px] flex h-[22px] w-[22px] items-center justify-center rounded-[3px] border border-[#f08080] bg-linear-to-b from-[#e6554f] to-[#b3141a]">
          <svg viewBox="0 0 14 14" className="h-3.5 w-3.5" fill="none" stroke="#fff" strokeWidth="2" strokeLinecap="round"><path d="M4 2.800a5.300 5.300 0 1 0 6 0M7 1v5.500" /></svg>
        </button>
      </div>
    </div>
  )
}

export default function App() {
  return (
    <div className="flex h-screen flex-col overflow-hidden">
      <div className="flex min-h-0 flex-1">
        <Dock />
        <div className="flex min-w-0 flex-1 flex-col">
          <TitleBar />
          <TabBar />
          <NavBar />
          <BookmarksBar />
          <Page />
          <StatusBar />
        </div>
      </div>
      <Panel />
    </div>
  )
}
